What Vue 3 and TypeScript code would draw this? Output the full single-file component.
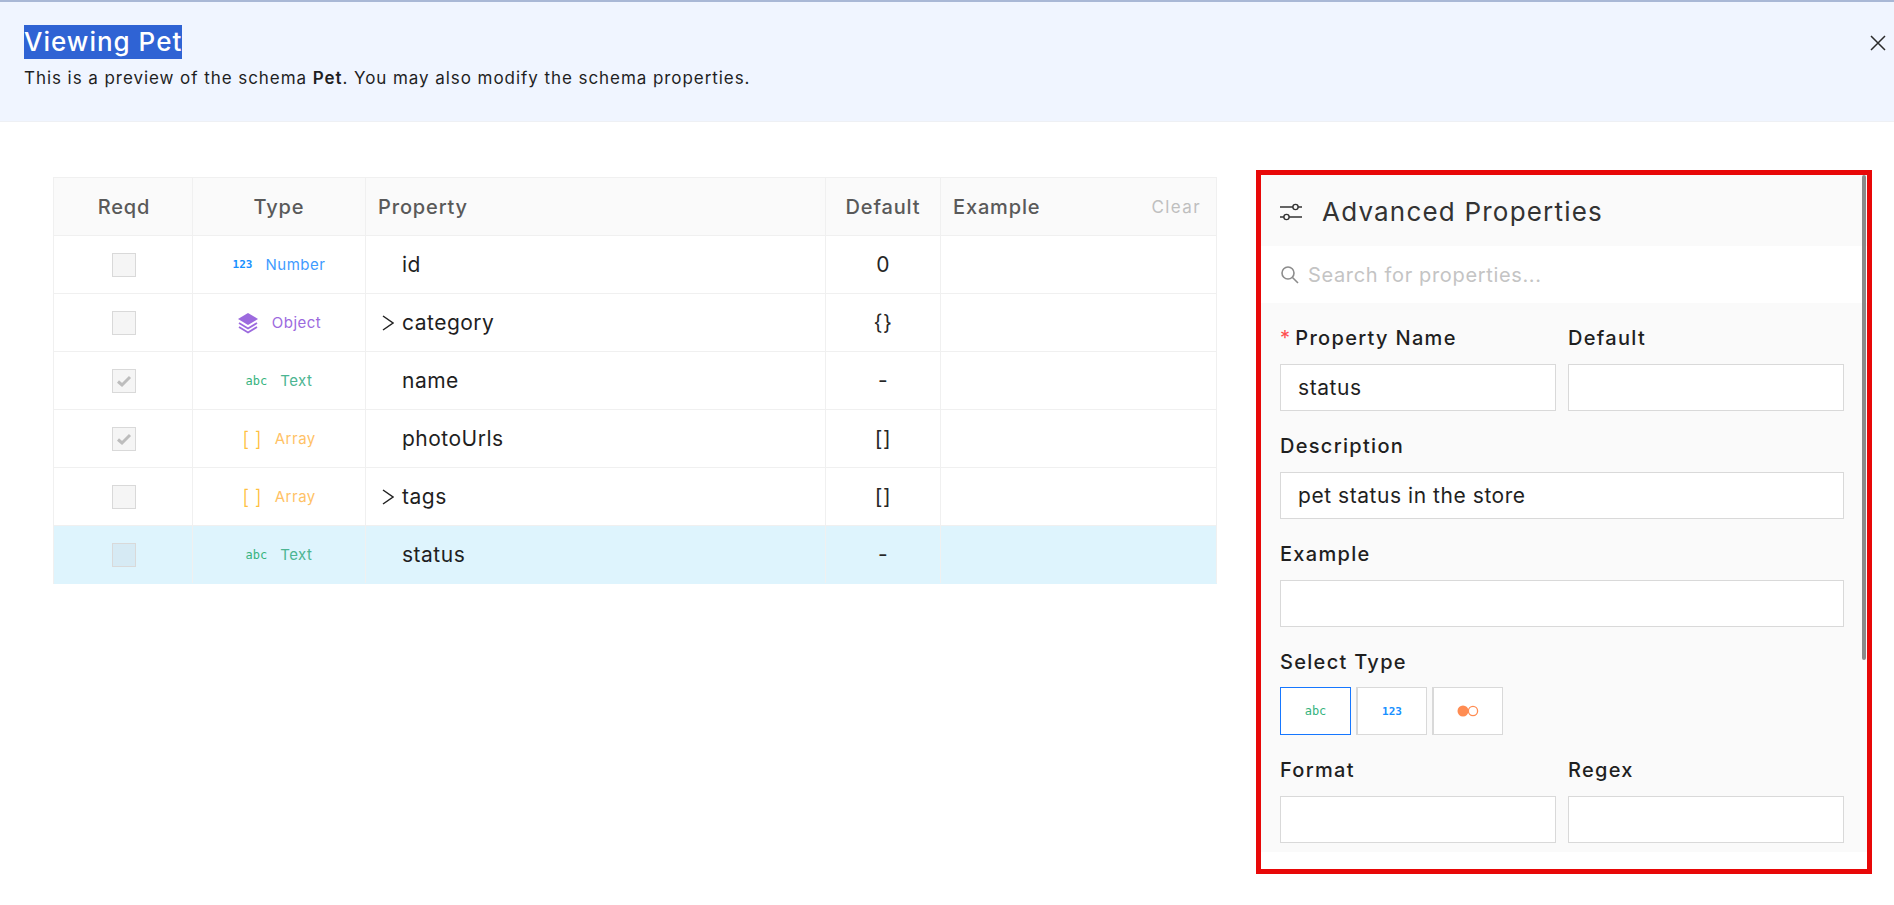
<script setup lang="ts">
type Kind = 'number' | 'object' | 'text' | 'array'

interface Row {
  req: boolean
  kind: Kind
  name: string
  def: string
  expand?: boolean
  active?: boolean
}

const kindLabels: Record<Kind, string> = {
  number: 'Number',
  object: 'Object',
  text: 'Text',
  array: 'Array',
}

const rows: Row[] = [
  { req: false, kind: 'number', name: 'id', def: '0' },
  { req: false, kind: 'object', name: 'category', def: '{}', expand: true },
  { req: true, kind: 'text', name: 'name', def: '-' },
  { req: true, kind: 'array', name: 'photoUrls', def: '[]' },
  { req: false, kind: 'array', name: 'tags', def: '[]', expand: true },
  { req: false, kind: 'text', name: 'status', def: '-', active: true },
]
</script>

<template>
  <div class="page">
    <header class="top">
      <div class="top-text">
        <h1><span class="picked">Viewing Pet</span></h1>
        <p>This is a preview of the schema <b>Pet</b>. You may also modify the schema properties.</p>
      </div>
      <svg class="close" width="16" height="16" viewBox="0 0 16 16">
        <path d="M1 1L15 15M15 1L1 15" stroke="#2b2b2b" stroke-width="1.5" fill="none" />
      </svg>
    </header>

    <main class="body">
      <div class="table">
        <div class="row head">
          <div class="cell center first">Reqd</div>
          <div class="cell center">Type</div>
          <div class="cell pad">Property</div>
          <div class="cell center">Default</div>
          <div class="cell pad split">
            <span>Example</span>
            <span class="clear">Clear</span>
          </div>
        </div>
        <div v-for="r in rows" :key="r.name" class="row" :class="{ active: r.active }">
          <div class="cell center first">
            <span class="check">
              <svg v-if="r.req" width="16" height="14" viewBox="0 0 16 14">
                <path d="M2 7.5L6 11L14 3" stroke="#bdbdbd" stroke-width="3" fill="none" />
              </svg>
            </span>
          </div>
          <div class="cell center">
            <span class="type" :class="r.kind">
              <span v-if="r.kind === 'number'" class="glyph">123</span>
              <span v-else-if="r.kind === 'text'" class="glyph">abc</span>
              <span v-else-if="r.kind === 'array'" class="brackets">[ ]</span>
              <svg v-else width="22" height="22" viewBox="0 0 22 22">
                <path d="M11 1L21 7L11 13L1 7Z" fill="#9c6ade" />
                <path d="M2 11L11 16.5L20 11M2 15L11 20.5L20 15" stroke="#9c6ade" stroke-width="1.8" fill="none" />
              </svg>
              <span class="type-label">{{ kindLabels[r.kind] }}</span>
            </span>
          </div>
          <div class="cell prop">
            <svg v-if="r.expand" class="chev" width="12" height="16" viewBox="0 0 12 16">
              <path d="M1 1L11 8L1 15" stroke="#222" stroke-width="1.5" fill="none" />
            </svg>
            <span class="prop-name">{{ r.name }}</span>
          </div>
          <div class="cell center value">{{ r.def }}</div>
          <div class="cell"></div>
        </div>
      </div>

      <aside class="panel">
        <div class="panel-title">
          <svg width="22" height="20" viewBox="0 0 22 20">
            <g stroke="#333" stroke-width="1.4" fill="none">
              <path d="M0 5H13M18 5H22M0 15H4M9 15H22" />
              <circle cx="15.5" cy="5" r="2.6" />
              <circle cx="6.5" cy="15" r="2.6" />
            </g>
          </svg>
          <span>Advanced Properties</span>
        </div>
        <div class="search">
          <svg width="19" height="19" viewBox="0 0 19 19">
            <circle cx="8" cy="8" r="6" stroke="#8c8c8c" stroke-width="1.6" fill="none" />
            <path d="M12.5 12.5L18 18" stroke="#8c8c8c" stroke-width="1.6" />
          </svg>
          <span>Search for properties...</span>
        </div>
        <div class="form">
          <div class="pair">
            <div class="field">
              <label><i>*</i>Property Name</label>
              <div class="input">status</div>
            </div>
            <div class="field">
              <label>Default</label>
              <div class="input"></div>
            </div>
          </div>
          <div class="field">
            <label>Description</label>
            <div class="input">pet status in the store</div>
          </div>
          <div class="field">
            <label>Example</label>
            <div class="input"></div>
          </div>
          <div class="field types">
            <label>Select Type</label>
            <div class="type-btns">
              <div class="type-btn on"><span class="glyph text-glyph">abc</span></div>
              <div class="type-btn"><span class="glyph num-glyph">123</span></div>
              <div class="type-btn">
                <svg width="22" height="12" viewBox="0 0 22 12">
                  <circle cx="6" cy="6" r="5.5" fill="#ff8c52" />
                  <circle cx="16" cy="6" r="4.6" fill="none" stroke="#ff8c52" stroke-width="1.3" />
                </svg>
              </div>
            </div>
          </div>
          <div class="pair">
            <div class="field">
              <label>Format</label>
              <div class="input"></div>
            </div>
            <div class="field">
              <label>Regex</label>
              <div class="input"></div>
            </div>
          </div>
        </div>
        <div class="thumb"></div>
      </aside>
    </main>
  </div>
</template>

<style>
html,
body {
  background: #fff;
  overflow: hidden;
}
</style>

<style scoped>
.page {
  width: 1894px;
  height: 905px;
  font-family: Inter, "Open Sans", sans-serif;
  color: #1f1f1f;
  overflow: hidden;
}

.top {
  box-sizing: border-box;
  height: 122px;
  border-top: 2px solid #a9b8d6;
  border-bottom: 1px solid #eef0f4;
  background: #f0f5ff;
  display: flex;
  justify-content: space-between;
  padding: 23px 8px 0 24px;
}
.top h1 {
  margin: 0;
  font-size: 26px;
  line-height: 34px;
  font-weight: 500;
  letter-spacing: 1px;
}
.picked {
  display: inline-block;
  background: #2f63d4;
  color: #fff;
}
.top p {
  margin: 7px 0 0;
  font-size: 17px;
  line-height: 24px;
  letter-spacing: 0.94px;
}
.top p b {
  font-weight: 600;
}
.close {
  margin-top: 10px;
}

.body {
  display: flex;
  align-items: flex-start;
  padding: 48px 0 0 53px;
}

.table {
  width: 1164px;
  margin-top: 7px;
  border-top: 1px solid #f0f0f0;
  border-left: 1px solid #f0f0f0;
  box-sizing: border-box;
}
.row {
  display: grid;
  grid-template-columns: 139px 173px 460px 115px 276px;
  height: 58px;
  box-sizing: border-box;
  border-bottom: 1px solid #f0f0f0;
}
.row.head {
  background: #fafafa;
  color: #595959;
  font-size: 20px;
  font-weight: 500;
  letter-spacing: 0.85px;
}
.row.active {
  background: #def4fd;
  border-bottom-color: #def4fd;
}
.cell {
  border-right: 1px solid #f0f0f0;
  display: flex;
  align-items: center;
  min-width: 0;
}
.center {
  justify-content: center;
}
.first {
  padding-left: 2px;
}
.pad {
  padding-left: 12px;
}
.split {
  justify-content: space-between;
  padding-right: 15px;
}
.clear {
  color: #bfbfbf;
  font-weight: 400;
  font-size: 17px;
  letter-spacing: 1.4px;
}

.check {
  box-sizing: border-box;
  width: 24px;
  height: 24px;
  border: 1px solid #d9d9d9;
  background: #f5f5f5;
  display: flex;
  align-items: center;
  justify-content: center;
}
.active .check {
  background: #d6eaf4;
}

.type {
  display: inline-flex;
  align-items: center;
  gap: 13px;
  font-size: 15px;
  letter-spacing: 0.5px;
}
.glyph {
  font-family: "DejaVu Sans Mono", monospace;
  font-size: 12px;
  letter-spacing: 0;
}
.brackets {
  font-size: 20px;
  line-height: 20px;
  font-weight: 300;
  letter-spacing: 0;
}
.number {
  color: #3f9bff;
}
.number .glyph,
.num-glyph {
  color: #1890ff;
  font-weight: 700;
  font-size: 11px;
}
.object {
  color: #9c6ade;
}
.text {
  color: #4cb592;
}
.text .glyph,
.text-glyph {
  color: #36b37e;
}
.array {
  color: #ffc266;
}
.array .brackets {
  color: #ffbf40;
}

.prop {
  position: relative;
  padding-left: 36px;
}
.chev {
  position: absolute;
  left: 16px;
  top: 21px;
}
.prop-name,
.value {
  font-size: 21px;
  letter-spacing: 0.5px;
}
.value {
  color: #262626;
}

.panel {
  position: relative;
  box-sizing: border-box;
  width: 616px;
  height: 704px;
  margin-left: 39px;
  border: 5px solid #e80808;
  flex: none;
}
.panel-title {
  box-sizing: border-box;
  height: 71px;
  padding-top: 2px;
  background: #fafafa;
  display: flex;
  align-items: center;
  gap: 20px;
  padding-left: 19px;
  font-size: 26px;
  letter-spacing: 1.2px;
  color: #333;
}
.search {
  height: 57px;
  background: #fff;
  display: flex;
  align-items: center;
  gap: 9px;
  padding-left: 19px;
  color: #c4c4c4;
  font-size: 20px;
  letter-spacing: 0.65px;
}
.form {
  background: #fafafa;
  padding: 23px 23px 9px 19px;
  display: flex;
  flex-direction: column;
  gap: 23px;
}
.pair {
  display: grid;
  grid-template-columns: 1fr 1fr;
  gap: 12px;
}
.field label {
  display: block;
  height: 24px;
  line-height: 24px;
  font-size: 20px;
  font-weight: 500;
  letter-spacing: 1.3px;
  color: #1f1f1f;
  margin-bottom: 14px;
}
.field label i {
  color: #ff4d4f;
  font-style: normal;
  font-weight: 400;
  margin-right: 4px;
}
.input {
  box-sizing: border-box;
  height: 47px;
  border: 1px solid #d9d9d9;
  background: #fff;
  padding: 0 17px;
  line-height: 45px;
  font-size: 21px;
  letter-spacing: 0.55px;
}
.types label {
  margin-bottom: 13px;
}
.type-btns {
  display: flex;
  gap: 5px;
}
.type-btn {
  box-sizing: border-box;
  width: 71px;
  height: 48px;
  background: #fff;
  border: 1px solid #d9d9d9;
  border-left-width: 2px;
  display: flex;
  align-items: center;
  justify-content: center;
}
.type-btn.on {
  border: 1px solid #1677ff;
}

.thumb {
  position: absolute;
  top: 0;
  right: 1px;
  width: 4px;
  height: 485px;
  background: #8a8a8a;
  border-radius: 2px;
}
</style>
